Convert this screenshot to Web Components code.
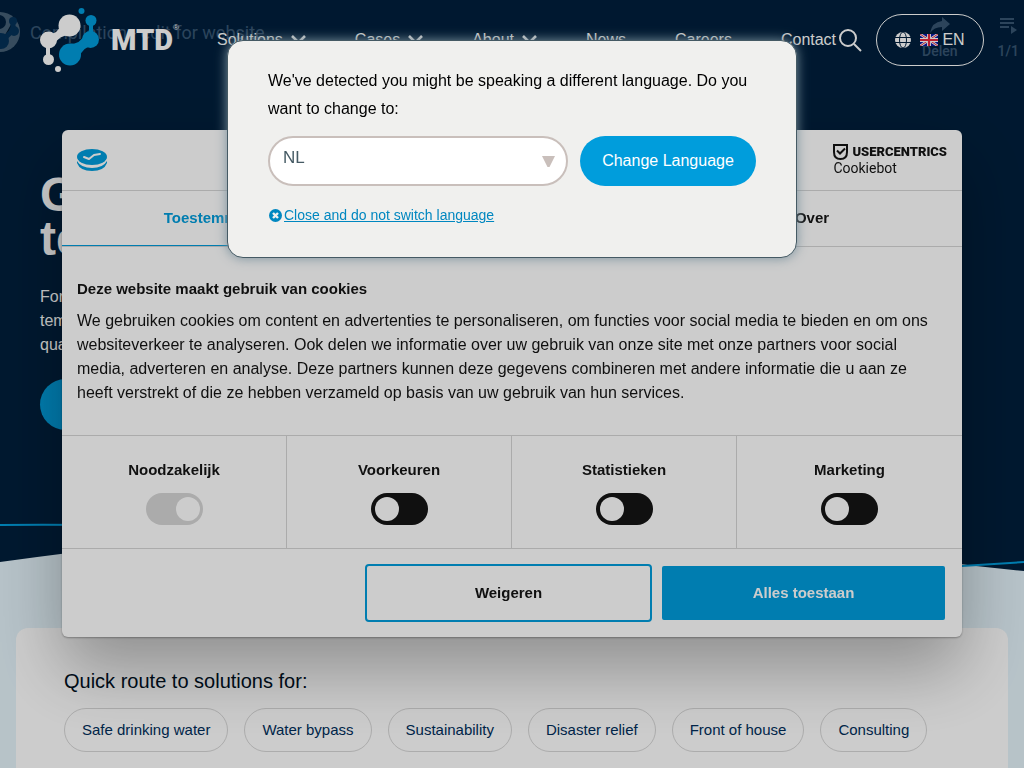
<!DOCTYPE html>
<html lang="en">
<head>
<meta charset="utf-8">
<meta name="viewport" content="width=device-width, initial-scale=1">
<title>MTD</title>
<style>
  html { height: 100%; }
  body { margin: 0; height: 100%; overflow: hidden; background: #e5f4fb; color: #001f3c; font-family: "Liberation Sans", Arial, sans-serif; font-size: 16px; }
</style>
</head>
<body>
<mtd-page>
  <mtd-header slot="header"></mtd-header>
  <mtd-hero></mtd-hero>
  <mtd-routes heading="Quick route to solutions for:">
    <mtd-chip>Safe drinking water</mtd-chip>
    <mtd-chip>Water bypass</mtd-chip>
    <mtd-chip>Sustainability</mtd-chip>
    <mtd-chip>Disaster relief</mtd-chip>
    <mtd-chip>Front of house</mtd-chip>
    <mtd-chip>Consulting</mtd-chip>
  </mtd-routes>
</mtd-page>
<cookie-dialog>
  <cookie-toggle label="Noodzakelijk" locked></cookie-toggle>
  <cookie-toggle label="Voorkeuren"></cookie-toggle>
  <cookie-toggle label="Statistieken"></cookie-toggle>
  <cookie-toggle label="Marketing"></cookie-toggle>
</cookie-dialog>
<language-dialog></language-dialog>

<script>
class Base extends HTMLElement {
  constructor() {
    super();
    this.attachShadow({ mode: "open" }).innerHTML = this.view();
  }
}

customElements.define("mtd-page", class extends Base {
  view() { return `
    <style>
      :host { display: block; position: relative; }
      ::slotted([slot=header]) { position: absolute; inset: 0 0 auto 0; z-index: 1; }
    </style>
    <slot name="header"></slot><main><slot></slot></main>`; }
});

customElements.define("nav-item", class extends Base {
  view() { return `
    <style>
      :host { display: block; }
      a { display: flex; align-items: center; gap: 8px; color: #fff; text-decoration: none; font-size: 16px; line-height: 24px; }
      svg { display: none; }
      :host([menu]) svg { display: block; }
    </style>
    <a href="#"><slot></slot><svg width="15" height="10" viewBox="0 0 15 10" fill="none" stroke="#fff" stroke-width="2.600"><path d="M1 1 7.500 7.500 14 1"/></svg></a>`; }
});

customElements.define("mtd-header", class extends Base {
  view() { return `
    <style>
      :host { display: block; }
      header { display: flex; align-items: center; padding: 0 40px; height: 80px; color: #fff; }
      .logo { display: flex; align-items: center; gap: 11px; color: #fff; text-decoration: none; width: 177px; }
      .logo b { font: 900 29px/32px Roboto, sans-serif; }
      .word { display: flex; align-items: flex-start; }
      .word span { font-size: 8px; line-height: 8px; }
      nav { display: flex; gap: 49px; }
      .find { border: 0; background: none; padding: 0; margin-left: 3px; display: flex; }
      .lang { box-sizing: border-box; margin-left: auto; width: 108px; height: 52px; border: 1px solid #fff; border-radius: 26px; background: none; color: #fff; font: 16px/24px "Liberation Sans", sans-serif; display: flex; align-items: center; justify-content: center; padding: 0; }
      .globe { margin-right: 9px; } .flag { margin-right: 4px; }
    </style>
    <header>
      <a class="logo" href="#" aria-label="MTD">
        <svg width="60" height="64" viewBox="0 0 60 64">
          <g fill="#fff"><path d="M10 26Q18 25 20 18L30 27Q19 27 14 37z"/><path d="M6 34h4v18H6z"/><circle cx="29.500" cy="17.500" r="11"/><circle cx="8.500" cy="32" r="8.500"/><circle cx="8.500" cy="51.500" r="5.500"/><circle cx="18" cy="61" r="3"/></g>
          <g fill="#009ddc"><path d="M29 36Q41 36 45 26L53 38Q42 39 40 49z"/><path d="M49 12h4v18h-4z"/><circle cx="30" cy="46.500" r="11"/><circle cx="50.500" cy="31.500" r="8.500"/><circle cx="51" cy="12.500" r="5.500"/><circle cx="41.500" cy="3" r="3"/></g>
        </svg>
        <span class="word"><b>MTD</b><span>®</span></span>
      </a>
      <nav>
        <nav-item menu>Solutions</nav-item><nav-item menu>Cases</nav-item><nav-item menu>About</nav-item>
        <nav-item>News</nav-item><nav-item>Careers</nav-item><nav-item>Contact</nav-item>
      </nav>
      <button class="find" aria-label="Search"><svg width="23" height="23" viewBox="0 0 23 23" fill="none" stroke="#fff" stroke-width="2"><circle cx="9" cy="9" r="8"/><path d="m15 15 7 7"/></svg></button>
      <button class="lang">
        <svg class="globe" width="16" height="16" viewBox="0 0 16 16"><circle cx="8" cy="8" r="8" fill="#fff"/><g fill="none" stroke="#001f3c" stroke-width="1"><ellipse cx="8" cy="8" rx="3.500" ry="8"/><path d="M0 5.500h16M0 10.500h16"/></g></svg>
        <svg class="flag" width="18" height="12" viewBox="0 0 18 12"><path fill="#0a17a7" d="M0 0h18v12H0z"/><path stroke="#fff" stroke-width="2.600" d="m0 0 18 12M18 0 0 12"/><path stroke="#e6273e" stroke-width="1" d="m0 0 18 12M18 0 0 12"/><path stroke="#fff" stroke-width="4" d="M9 0v12M0 6h18"/><path stroke="#e6273e" stroke-width="2.200" d="M9 0v12M0 6h18"/></svg>
        <span>EN</span>
      </button>
    </header>`; }
});

customElements.define("mtd-hero", class extends Base {
  view() { return `
    <style>
      :host { display: block; position: relative; height: 628px; overflow: hidden; color: #fff; }
      .wave { position: absolute; inset: 0; width: 100%; height: 100%; }
      .video { position: absolute; inset: 0 0 auto 0; display: flex; align-items: flex-start; padding: 12px 5px 0 0; opacity: .3; color: #b5d3f0; font: 18px/24px Roboto, sans-serif; }
      .avatar { margin-left: -20px; margin-right: 10px; flex: none; }
      .title { margin-top: 9px; flex: 1; }
      .tool { display: flex; flex-direction: column; align-items: center; font: 500 14px/16px Roboto, sans-serif; }
      .share { margin: 5px 40px 0 0; gap: 9px; }
      .list { margin-top: 5px; gap: 9px; }
      .copy { position: relative; padding: 173px 40px 0; }
      h1 { margin: 0; font-size: 48px; line-height: 44px; }
      p { margin: 24px 0 22px; line-height: 24px; }
      .cta { display: block; width: 180px; height: 51px; border-radius: 26px; background: linear-gradient(90deg, #009ddc, #0078b4); }
    </style>
    <svg class="wave" viewBox="0 0 1024 628" preserveAspectRatio="none">
      <path fill="#001f3c" d="M0 0H1024V571L976 566Q900 555 512 530 300 520 0 562z"/>
      <path fill="none" stroke="#009ddc" stroke-width="2" d="M0 525Q200 523 420 540T962 566L1024 562"/>
    </svg>
    <div class="video">
      <svg class="avatar" width="40" height="40" viewBox="0 0 40 40"><circle cx="20" cy="20" r="20" fill="#e5f4fb"/><path stroke="#0f5d99" stroke-width="5" d="m21 30 12-12V9"/><circle cx="21" cy="29" r="8" fill="#0f5d99"/><circle cx="34" cy="19" r="5" fill="#0f5d99"/><circle cx="33" cy="9" r="4" fill="#0f5d99"/><circle cx="19" cy="10" r="7" fill="#001f3c"/></svg>
      <span class="title">Compilation - edit for website</span>
      <span class="tool share"><svg width="20" height="17" viewBox="0 0 20 17"><path fill="currentColor" d="M12 0 20 7 12 14V10Q4 10 0 16 2 5 12 4z"/></svg><span>Delen</span></span>
      <span class="tool list"><svg width="18" height="17" viewBox="0 0 18 17"><path fill="currentColor" d="M1 1h14v2H1zM1 5h14v2H1zM1 9h9v2H1zM12 9l6 4-6 4z"/></svg><span>1/1</span></span>
    </div>
    <div class="copy">
      <h1>Global<br>temporary</h1>
      <p>For<br>temporary<br>quality</p>
      <a class="cta" href="#" aria-label="Solutions"></a>
    </div>`; }
});

customElements.define("mtd-chip", class extends Base {
  view() { return `
    <style>
      :host { display: block; }
      a { display: block; padding: 9px 17px; border: 1px solid #d8d8d8; border-radius: 22px; color: #002e5b; text-decoration: none; font-size: 15px; line-height: 24px; white-space: nowrap; }
    </style><a href="#"><slot></slot></a>`; }
});

customElements.define("mtd-routes", class extends Base {
  view() { return `
    <style>
      :host { display: block; margin: 0 16px; padding: 39px 48px 48px; background: #fff; border-radius: 12px; }
      h2 { margin: 0 0 13px; font-size: 20px; line-height: 28px; font-weight: 400; color: #00101f; }
      .chips { display: flex; gap: 16px; }
    </style>
    <h2>${this.getAttribute("heading")}</h2><div class="chips"><slot></slot></div>`; }
});

customElements.define("cookie-toggle", class extends Base {
  view() { const locked = this.hasAttribute("locked"); return `
    <style>
      :host { display: block; border-right: 1px solid #d6d6d6; }
      :host(:last-of-type) { border-right: 0; }
      label { display: flex; flex-direction: column; align-items: center; gap: 11px; padding: 22px 0 23px; font-weight: 700; font-size: 15px; line-height: 24px; }
      input { appearance: none; box-sizing: border-box; margin: 0; width: 57px; height: 32px; padding: 4px; border-radius: 16px; background: #141414; display: flex; }
      input::before { content: ""; width: 24px; height: 24px; border-radius: 12px; background: #fff; }
      input:checked { background: #d6d6d6; justify-content: flex-end; padding-right: 3px; }
    </style>
    <label>${this.getAttribute("label")}<input type="checkbox" ${locked ? "checked disabled" : ""}></label>`; }
});

customElements.define("cookie-dialog", class extends Base {
  view() { return `
    <style>
      :host { display: block; position: fixed; z-index: 2; inset: 130px 62px auto; max-width: 900px; margin: 0 auto; background: #fff; color: #141414; border-radius: 6px; box-shadow: 0 32px 68px rgba(0,0,0,.3), 0 1px 2px rgba(0,0,0,.3); font-size: 15px; }
      header { display: flex; align-items: center; justify-content: space-between; height: 60px; padding: 0 15px; border-bottom: 1px solid #d6d6d6; }
      .brand { display: block; text-decoration: none; color: #141414; font-family: Roboto, sans-serif; }
      .brand div { display: flex; align-items: center; gap: 4px; }
      .brand b { font: 900 13px/16px Roboto, sans-serif; }
      .brand span { display: block; font-size: 14px; line-height: 16px; }
      .tabs { display: grid; grid-template-columns: repeat(3, 1fr); border-bottom: 1px solid #d6d6d6; }
      .tabs button { height: 55px; border: 0; border-bottom: 1px solid transparent; background: none; padding: 0; color: #141414; font: 700 15px/24px "Liberation Sans", sans-serif; }
      .tabs .on { color: #009ddc; border-color: #009ddc; }
      section { padding: 30px 15px; }
      h2 { margin: 0 0 8px; font-size: 15px; line-height: 24px; }
      p { margin: 0; font-size: 16px; line-height: 24px; }
      p span { display: block; }
      .grid { display: grid; grid-template-columns: repeat(4, 1fr); border: solid #d6d6d6; border-width: 1px 0; }
      footer { display: flex; justify-content: flex-end; align-items: center; gap: 10px; padding: 15px 17px; }
      footer button { box-sizing: border-box; flex: 0 1 287px; height: 58px; border: 2px solid #009ddc; border-radius: 4px; background: #fff; color: #141414; font: 700 15px/24px "Liberation Sans", sans-serif; }
      footer .yes { flex-basis: 283px; height: 54px; border-radius: 2px; background: #009ddc; color: #fff; }
    </style>
    <header>
      <svg width="30" height="23" viewBox="0 0 30 23"><path fill="#009ddc" d="M0 12Q4 19 15 19T30 12V14Q27 22 15 22T0 14z"/><ellipse cx="15" cy="8" rx="15" ry="8" fill="#009ddc"/><path fill="none" stroke="#fff" stroke-width="1" d="M0 10.500Q4 17.500 15 17.500T30 10.500"/><path fill="none" stroke="#fff" stroke-width="2" stroke-linecap="round" stroke-linejoin="round" d="m7 8 5 2 5-4 6-1"/></svg>
      <a class="brand" href="#"><div><svg width="15" height="16" viewBox="0 0 15 16" fill="none" stroke="#141414" stroke-width="2"><path d="M1 1h13v7Q14 15 7.500 15T1 8z"/><path d="m4 6.500 3 3 5-5"/></svg><b>USERCENTRICS</b></div><span>Cookiebot</span></a>
    </header>
    <div class="tabs" role="tablist"><button class="on" role="tab" aria-selected="true">Toestemming</button><button role="tab" aria-label="Details"></button><button role="tab">Over</button></div>
    <section>
      <h2>Deze website maakt gebruik van cookies</h2>
      <p><span>We gebruiken cookies om content en advertenties te personaliseren, om functies voor social media te bieden en om ons</span>
      <span>websiteverkeer te analyseren. Ook delen we informatie over uw gebruik van onze site met onze partners voor social</span>
      <span>media, adverteren en analyse. Deze partners kunnen deze gegevens combineren met andere informatie die u aan ze</span>
      <span>heeft verstrekt of die ze hebben verzameld op basis van uw gebruik van hun services.</span></p>
    </section>
    <div class="grid"><slot></slot></div>
    <footer><button>Weigeren</button><button class="yes">Alles toestaan</button></footer>`; }
});

customElements.define("language-dialog", class extends Base {
  view() { return `
    <style>
      :host { display: flex; align-items: flex-start; justify-content: center; position: fixed; z-index: 3; inset: 0; padding-top: 40px; background: rgba(0,0,0,.2); }
      form { box-sizing: border-box; width: 570px; margin: 0 16px; padding: 26px 40px 29px; border: 1px solid #455a64; border-radius: 16px; background: #f0f0ee; color: #000; box-shadow: 0 0 12px #78909c; }
      p { margin: 0 0 13px; font-size: 16px; line-height: 28px; white-space: nowrap; }
      .row { display: flex; gap: 12px; }
      .pick { flex: 1; display: grid; align-items: center; }
      .pick > * { grid-area: 1 / 1; }
      select { appearance: none; box-sizing: border-box; width: 100%; height: 50px; padding: 0 40px 6px 13px; border: 2px solid #c9bfbb; border-radius: 25px; background: #fff; color: #455a64; font: 17px/24px "Liberation Sans", sans-serif; }
      .pick svg { justify-self: end; margin-right: 13px; pointer-events: none; }
      button { flex: 0 0 176px; height: 50px; border: 0; border-radius: 25px; padding: 0; background: #009ddc; color: #fff; font: 16px/24px "Liberation Sans", sans-serif; }
      .close { display: flex; align-items: center; gap: 2px; margin: 17px 0 1px 1px; color: #0087c0; text-decoration: none; font-size: 14px; line-height: 24px; }
      .close span { text-decoration: underline; }
    </style>
    <form>
      <p>We've detected you might be speaking a different language. Do you<br>want to change to:</p>
      <div class="row">
        <label class="pick"><select aria-label="Language"><option>NL</option></select><svg width="13" height="11" viewBox="0 0 13 11"><path fill="#c9bfbb" d="M0 0h13L7.500 11h-2z"/></svg></label>
        <button type="button">Change Language</button>
      </div>
      <a class="close" href="#"><svg width="13" height="13" viewBox="0 0 13 13"><circle cx="6.500" cy="6.500" r="6.500" fill="#0087c0"/><path stroke="#f0f0ee" stroke-width="2.400" d="m4 4 5 5M9 4 4 9"/></svg><span>Close and do not switch language</span></a>
    </form>`; }
});
</script>
</body>
</html>
